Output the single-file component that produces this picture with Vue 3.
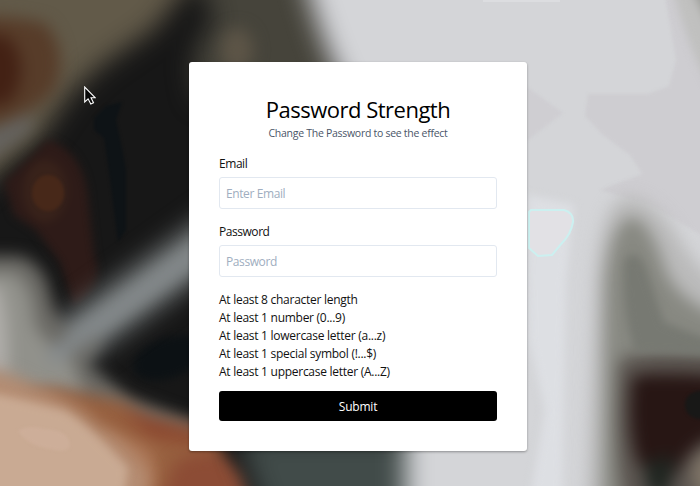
<script setup>
import { ref } from 'vue'

const email = ref('')
const password = ref('')
const rules = [
  'At least 8 character length',
  'At least 1 number (0...9)',
  'At least 1 lowercase letter (a...z)',
  'At least 1 special symbol (!...$)',
  'At least 1 uppercase letter (A...Z)',
]
</script>

<template>
  <main class="page">
    <svg class="backdrop" viewBox="0 0 700 486" preserveAspectRatio="none" aria-hidden="true">
      <defs>
        <filter id="b2" x="-50%" y="-50%" width="200%" height="200%" color-interpolation-filters="sRGB"><feGaussianBlur stdDeviation="1.5" /></filter>
        <filter id="b4" x="-50%" y="-50%" width="200%" height="200%" color-interpolation-filters="sRGB"><feGaussianBlur stdDeviation="4" /></filter>
        <filter id="b8" x="-50%" y="-50%" width="200%" height="200%" color-interpolation-filters="sRGB"><feGaussianBlur stdDeviation="8" /></filter>
        <filter id="b13" x="-50%" y="-50%" width="200%" height="200%" color-interpolation-filters="sRGB"><feGaussianBlur stdDeviation="13" /></filter>
      </defs>
      <rect width="700" height="486" fill="#171717" />

      <!-- upper left: olive, rust and grey -->
      <g filter="url(#b13)">
        <path d="M-40-40H207L155 28 100 66 70 94 40 138-40 204Z" fill="#625a49" />
        <path d="M190-40H310L350 100H200Q182 55 215 20Z" fill="#46443b" />
      </g>
      <g filter="url(#b8)">
        <path d="M-30 16Q20 16 46 24Q70 54 54 90Q34 116-30 132Z" fill="#573c29" />
        <ellipse cx="-3" cy="70" rx="24" ry="36" fill="#432114" />
        <path d="M-30 140L20 118Q42 112 28 132L-30 174Z" fill="#656360" />
        <ellipse cx="237" cy="50" rx="16" ry="22" fill="#5d5547" />
      </g>

      <!-- left: dark red patch -->
      <g filter="url(#b4)">
        <path d="M48 140Q80 150 87 190L94 255Q106 286 74 306L60 262 36 230 14 215 4 182Z" fill="#2e1b18" />
        <ellipse cx="45" cy="191" rx="22" ry="31" fill="#38221a" />
      </g>
      <ellipse cx="48" cy="193" rx="16" ry="18" fill="#472819" filter="url(#b2)" />
      <path d="M94 118L106 106 122 102 116 120 122 148 126 170V230L118 242 110 180 104 138 94 130Z" fill="#0e1316" filter="url(#b2)" />
      <ellipse cx="168" cy="358" rx="36" ry="20" transform="rotate(-20 168 358)" fill="#0c1114" filter="url(#b4)" />

      <!-- lower left: grey ribs -->
      <g filter="url(#b13)">
        <path d="M30 371L230 227" fill="none" stroke="#7b8081" stroke-width="45" />
      </g>
      <g filter="url(#b8)">
        <path d="M-40 256H18Q46 262 52 302Q60 330 78 334L104 340 86 362 130 398 200 424V530H-40Z" fill="#6c6b66" />
        <path d="M-40 273H12Q32 282 34 322Q42 344 68 352L86 398-40 385Z" fill="#91918b" />
        <path d="M-40 285H-2Q10 310 8 375L-40 375Z" fill="#b0aeaa" />
        <path d="M50 359L210 243" fill="none" stroke="#858a8c" stroke-width="16" />
      </g>

      <!-- lower left: warm skin tones -->
      <g filter="url(#b8)">
        <path d="M55 388L120 400 150 415 220 432V540H-40V400Z" fill="#97603f" />
        <path d="M118 408Q145 418 194 431L212 446 150 437Z" fill="#8b462e" />
        <path d="M100 430L145 445Q164 455 150 510H90Z" fill="#ab7656" />
      </g>
      <path d="M176 462Q202 448 224 456L242 474 254 510H158Z" fill="#8c4c35" filter="url(#b8)" />
      <g filter="url(#b8)">
        <path d="M-30 367Q10 370 34 386Q76 400 98 425Q128 443 149 475L142 510H-30Z" fill="#b58e74" />
      </g>
      <g filter="url(#b4)">
        <path d="M-30 389Q20 398 65 411Q92 428 128 468L121 520H20L-30 474Z" fill="#c9aa93" />
      </g>
      <path d="M18 431Q28 424 44 429Q69 430 70 445Q68 454 50 449Q28 446 18 431Z" fill="#cdae99" filter="url(#b2)" />

      <!-- lower middle -->
      <g filter="url(#b13)">
        <path d="M236 435H430V540H274Z" fill="#414b49" />
        <path d="M296-50H760V540H405V430L350 100Q322 55 296-50Z" fill="#d4d5d8" />
      </g>
      <path d="M528 195L574 205 566 280 562 500H530L545 410 529 340Z" fill="#dddfe3" filter="url(#b4)" />
      <path d="M483-2H560V2H483Z" fill="#dcdde0" />

      <!-- right: soft mauve shadow -->
      <g filter="url(#b2)">
        <path d="M588 94H648L669 86 676 60 664-10H710V240L650 205 600 190 642 174 630 155 603 135 585 116Z" fill="#cecdd1" />
        <path d="M527 87L563 113 527 141Z" fill="#cfced2" />
      </g>
      <g filter="url(#b4)">
        <path d="M673-10H715V96Q690 55 673-10Z" fill="#c0c0bf" />
        <path d="M692-10H715V38Z" fill="#9fa09c" />
      </g>

      <!-- right: olive column with dark base -->
      <g filter="url(#b8)">
        <path d="M586 520L595 280Q600 198 630 196Q658 200 680 240Q705 280 735 294V530H588Z" fill="#bababa" />
        <path d="M602 520L605 282Q611 218 633 217Q650 220 666 271Q682 308 745 324V530H604Z" fill="#888982" />
        <path d="M619 362Q634 346 740 354V530H630Q611 465 619 362Z" fill="#5b5550" />
      </g>
      <path d="M624 262Q634 244 645 266L664 322 710 340V356L635 352Q622 315 624 262Z" fill="#777972" filter="url(#b4)" />
      <g filter="url(#b8)">
        <path d="M632 378Q640 370 735 377V430Q694 438 682 465L664 490 640 466Q626 436 632 378Z" fill="#271614" />
        <path d="M645 462L675 455 668 500 646 491Z" fill="#202621" />
        <ellipse cx="721" cy="474" rx="29" ry="28" fill="#817668" />
      </g>
      <ellipse cx="700" cy="405" rx="15" ry="14" fill="#181817" filter="url(#b2)" />

      <path d="M529 212L531 210H564Q574 213 573 222Q571 234 562 243L552 255 538 256 529 248Z" fill="#e2e1e5" stroke="#ccf0f0" stroke-width="2" />
    </svg>

    <form class="card" @submit.prevent>
      <h1 class="title">Password Strength</h1>
      <p class="subtitle">Change The Password to see the effect</p>
      <label class="label" for="email">Email</label>
      <input id="email" v-model="email" class="input" type="email" placeholder="Enter Email" />
      <label class="label" for="password">Password</label>
      <input id="password" v-model="password" class="input" type="password" placeholder="Password" />
      <ul class="rules">
        <li v-for="rule in rules" :key="rule">{{ rule }}</li>
      </ul>
      <button class="submit" type="submit">Submit</button>
    </form>

    <svg class="cursor" viewBox="0 0 12 19" aria-hidden="true">
      <path d="M.7 1V16L4.1 12.8 6.8 18 9.5 16.8 7 11.8H11.3Z" fill="#080808" stroke="#fff" stroke-width="1.1" />
    </svg>
  </main>
</template>

<style>
body {
  margin: 0;
}
</style>

<style scoped>
.page {
  position: relative;
  box-sizing: border-box;
  display: flex;
  justify-content: center;
  align-items: flex-start;
  width: 100%;
  height: 486px;
  padding: 62px 0 0 16px;
  overflow: hidden;
  font-family: "Segoe UI", "Open Sans", "Noto Sans", sans-serif;
  font-size: 12px;
  line-height: 18px;
  color: #000;
}
.backdrop {
  position: absolute;
  inset: 0;
  width: 100%;
  height: 100%;
}
.card {
  position: relative;
  box-sizing: border-box;
  display: flex;
  flex-direction: column;
  width: 338px;
  height: 389px;
  padding: 32px 30px 30px;
  border-radius: 3px;
  background: #fff;
  box-shadow: 0 1px 3px rgb(0 0 0 / 20%), 0 1px 2px rgb(0 0 0 / 15%);
}
.title {
  margin: 0;
  font-size: 22px;
  font-weight: 400;
  line-height: 30px;
  letter-spacing: -0.5px;
  text-align: center;
}
.subtitle {
  margin: 0 0 12px;
  font-size: 10.5px;
  line-height: 18px;
  letter-spacing: -0.28px;
  color: #4a5568;
  text-align: center;
}
.label {
  box-sizing: border-box;
  height: 18px;
  padding-top: 1px;
  line-height: 17px;
  letter-spacing: -0.45px;
}
.label,
.rules {
  color: #111;
}
.input {
  box-sizing: border-box;
  width: 100%;
  height: 32px;
  margin: 5px 0 13px;
  padding: 1px 6px 0;
  border: 1px solid #e2e8f0;
  border-radius: 3px;
  background: #fff;
  font: inherit;
  letter-spacing: -0.4px;
}
.input::placeholder {
  color: #a0aec0;
  opacity: 1;
}
.rules {
  margin: 0;
  padding: 1px 0 0;
  list-style: none;
  letter-spacing: -0.27px;
}
.submit {
  height: 30px;
  margin-top: 10px;
  padding: 1px 0 0;
  border: 0;
  border-radius: 3px;
  background: #000;
  color: #fff;
  font: inherit;
  letter-spacing: -0.2px;
}
.cursor {
  position: absolute;
  left: 84px;
  top: 86px;
  width: 12px;
  height: 19px;
}
</style>
